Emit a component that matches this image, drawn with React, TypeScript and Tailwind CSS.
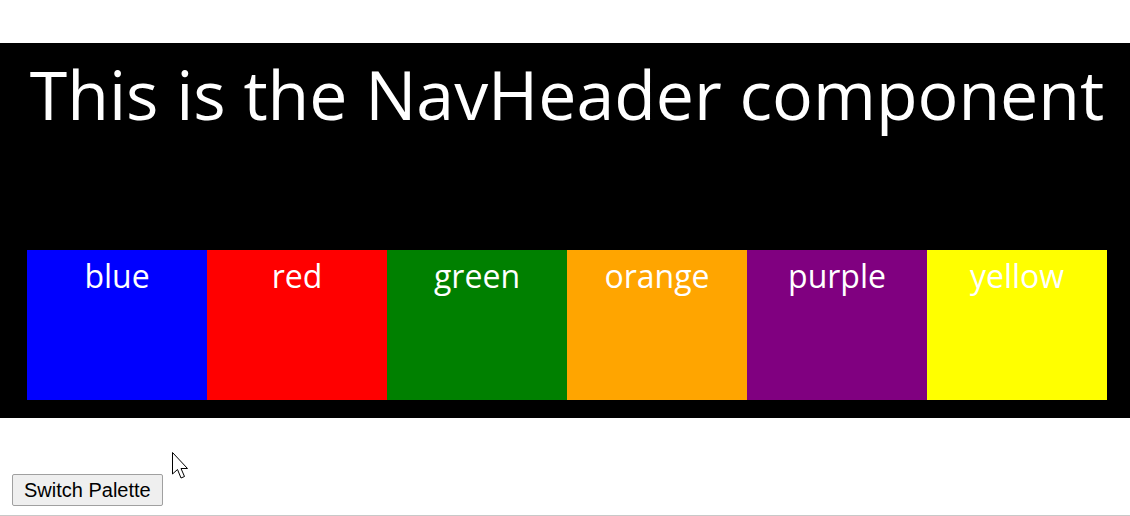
import React from "react";

const colors: { name: string; bg: string }[] = [
  { name: "blue", bg: "bg-[#0000ff]" },
  { name: "red", bg: "bg-[#ff0000]" },
  { name: "green", bg: "bg-[#008000]" },
  { name: "orange", bg: "bg-[#ffa500]" },
  { name: "purple", bg: "bg-[#800080]" },
  { name: "yellow", bg: "bg-[#ffff00]" },
];

export default function App() {
  return (
    <div className="relative w-[1130px] h-[516px] bg-white overflow-hidden border-b border-[#c8c8c8]">
      <div className="h-[43px]" />
      <div className="bg-black h-[375px] pl-[27px] flex flex-col">
        <div
          className="w-[1080px] h-[207px] flex justify-center text-white text-[68px] leading-none pt-[17px] whitespace-nowrap"
          style={{ fontFamily: '"Open Sans", "Noto Sans", sans-serif' }}
        >
          This is the NavHeader component
        </div>
        <div className="flex">
          {colors.map((c) => (
            <div
              key={c.name}
              className={`${c.bg} shrink-0 w-[180px] h-[150px] flex justify-center text-white text-[32px] leading-none pt-[10px]`}
              style={{ fontFamily: '"Open Sans", "Noto Sans", sans-serif' }}
            >
              {c.name}
            </div>
          ))}
        </div>
      </div>
      <div className="pt-[56px] pl-[12px]">
        <button
          className="h-[32px] px-[11px] border border-[#a0a0a0] rounded-[2px] bg-[#efefef] text-[20px] text-black leading-none"
          style={{ fontFamily: '"Liberation Sans", Arial, sans-serif' }}
        >
          Switch Palette
        </button>
      </div>
      <svg
        className="absolute left-[172px] top-[452px]"
        width="20"
        height="30"
        viewBox="0 0 20 30"
      >
        <path
          d="M0.5 0.5 L0.5 22 L5.5 17.5 L9 26 L12.5 24.5 L9 16.5 L15.5 16.5 Z"
          fill="white"
          stroke="black"
          strokeWidth="1"
          strokeLinejoin="miter"
        />
      </svg>
    </div>
  );
}
